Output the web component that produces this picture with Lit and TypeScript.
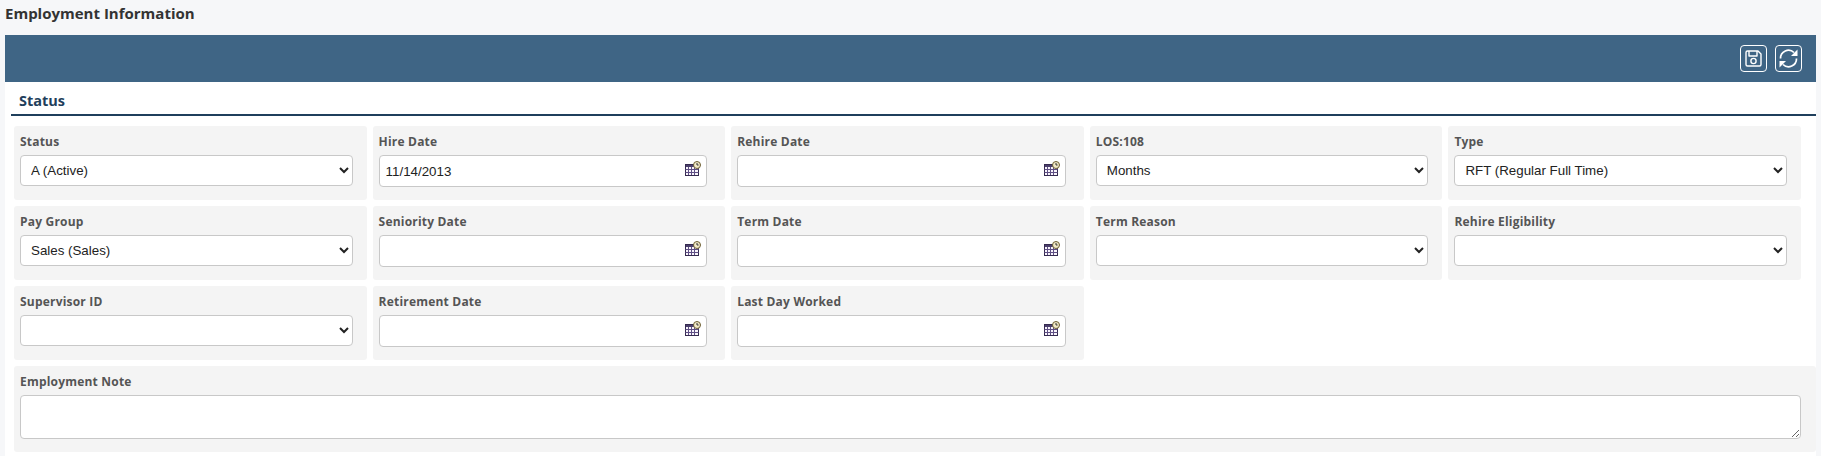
import { LitElement, html, css } from "lit";
import { customElement } from "lit/decorators.js";

const calendar = html`<svg class="cal" width="16" height="15" viewBox="0 0 16 15">
  <rect x="0.5" y="3.5" width="13" height="11" fill="#f8f4fb" stroke="#352a50"/>
  <rect x="1" y="4" width="12" height="2" fill="#4a3f6b"/>
  <path d="M0.5 8.5h13M0.5 11.500h13M3.500 6v8M6.500 6v8M9.500 6v8" stroke="#5f4f85" fill="none"/>
  <circle cx="12" cy="4" r="3.500" fill="#f1e8c6" stroke="#6a5c30"/>
  <path d="M12 2v2h1.600" stroke="#333" fill="none"/>
</svg>`;

type F = { label: string; kind: "select" | "date"; value?: string };
const fields: F[] = [
  { label: "Status", kind: "select", value: "A (Active)" },
  { label: "Hire Date", kind: "date", value: "11/14/2013" },
  { label: "Rehire Date", kind: "date" },
  { label: "LOS:108", kind: "select", value: "Months" },
  { label: "Type", kind: "select", value: "RFT (Regular Full Time)" },
  { label: "Pay Group", kind: "select", value: "Sales (Sales)" },
  { label: "Seniority Date", kind: "date" },
  { label: "Term Date", kind: "date" },
  { label: "Term Reason", kind: "select" },
  { label: "Rehire Eligibility", kind: "select" },
  { label: "Supervisor ID", kind: "select" },
  { label: "Retirement Date", kind: "date" },
  { label: "Last Day Worked", kind: "date" },
];

@customElement("app-root")
export class AppRoot extends LitElement {
  static styles = css`
    :host { display: block; height: 456px; overflow: hidden; background: #f6f7f9; font-family: "Open Sans", sans-serif; }
    h1 { margin: 0; padding: 3px 0 0 5px; height: 35px; box-sizing: border-box; font-size: 15px; line-height: 20px; font-weight: 700; color: #333; }
    .panel { margin: 0 5px; background: #fff; height: 421px; }
    .bar { height: 47px; background: #3f6585; display: flex; justify-content: flex-end; align-items: center; gap: 8px; padding-right: 14px; }
    .btn { width: 27px; height: 27px; box-sizing: border-box; border: 1px solid #fff; border-radius: 4px; display: flex; align-items: center; justify-content: center; }
    .section { margin-left: 6px; height: 32px; border-bottom: 2px solid #1f3f5c; padding-left: 8px; font-size: 14.5px; font-weight: 700; line-height: 37px; color: #1f3f5c; }
    .grid { display: grid; grid-template-columns: repeat(5, 1fr); gap: 6px; padding: 10px 15px 0 9px; }
    .cell { background: #f4f4f4; border-radius: 3px; height: 74px; box-sizing: border-box; padding: 6px 14px 0 6px; }
    .note { height: 86px; margin: 6px 0 0 9px; padding-right: 15px; }
    label { display: block; font-size: 12px; font-weight: 700; line-height: 19px; height: 23px; color: #555; letter-spacing: 0.2px; }
    select, input, textarea { display: block; width: 100%; box-sizing: border-box; margin: 0; background: #fff; border: 1px solid #c8c8c8; border-radius: 4px; font-family: "Liberation Sans", Arial, sans-serif; font-size: 13.33px; color: #222; outline: none; }
    select { height: 31px; padding: 0 0 0 6px; }
    .date { position: relative; width: calc(100% - 4px); }
    input { height: 32px; padding: 0 22px 0 6px; }
    .cal { position: absolute; right: 6px; top: 6px; }
    textarea { height: 44px; padding: 2px; }
  `;

  private control(f: F) {
    if (f.kind === "select") {
      return html`<select><option>${f.value ?? ""}</option></select>`;
    }
    return html`<div class="date"><input type="text" .value=${f.value ?? ""} />${calendar}</div>`;
  }

  render() {
    return html`
      <h1>Employment Information</h1>
      <div class="panel">
        <div class="bar">
          <div class="btn"><svg width="19" height="19" viewBox="0 0 19 19" fill="none" stroke="#fff" stroke-width="1.400" stroke-linejoin="round">
            <path d="M2 3.500a1.500 1.500 0 0 1 1.500-1.500H14l3 3v10.500a1.500 1.500 0 0 1-1.500 1.500h-12A1.500 1.500 0 0 1 2 15.500z"/>
            <path d="M5 2v5h8V2"/><circle cx="9.500" cy="12" r="2.600"/></svg></div>
          <div class="btn"><svg width="23" height="23" viewBox="0 0 23 23" fill="none" stroke="#fff" stroke-width="1.700">
            <path d="M3.500 11.500a8 8 0 0 1 13.500-6"/><path d="M19.500 11.500a8 8 0 0 1-13.500 6"/>
            <path d="M20.500 2.500v6.500h-6.500z" fill="#fff" stroke="none"/><path d="M2.500 20.500v-6.500h6.500z" fill="#fff" stroke="none"/></svg></div>
        </div>
        <div class="section">Status</div>
        <div class="grid">
          ${fields.map((f) => html`<div class="cell"><label>${f.label}</label>${this.control(f)}</div>`)}
        </div>
        <div class="cell note"><label>Employment Note</label><textarea></textarea></div>
      </div>
    `;
  }
}
